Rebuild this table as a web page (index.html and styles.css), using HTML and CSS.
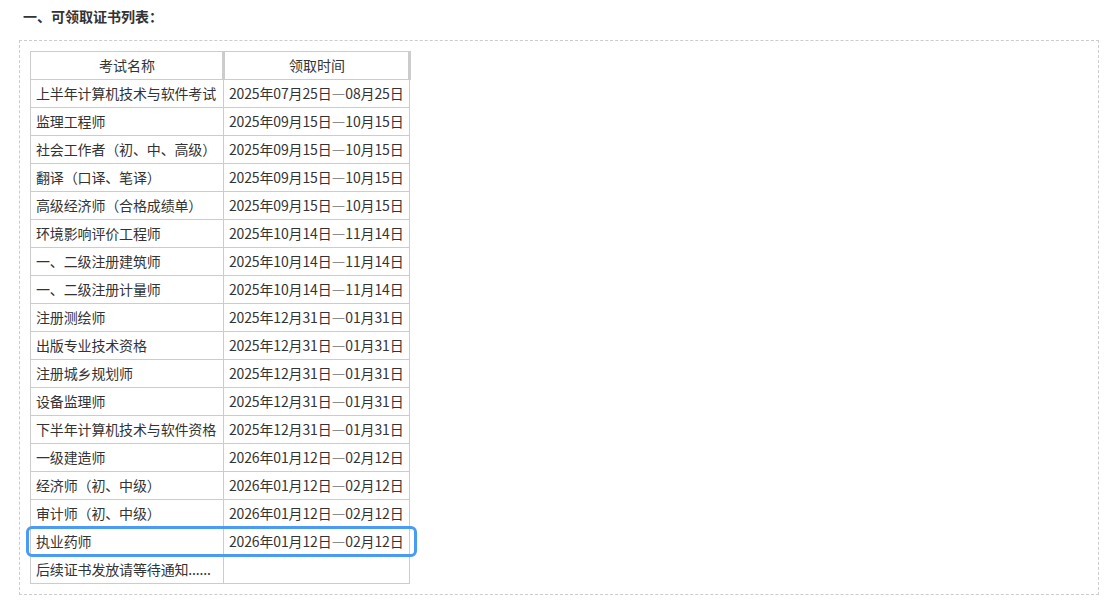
FILE: index.html
```html
<!DOCTYPE html>
<html lang="zh-CN">
<head>
  <meta charset="UTF-8">
  <title>可领取证书列表</title>
  <link rel="stylesheet" href="styles.css">
</head>
<body>
  <h3 class="titulo">一、可领取证书列表：</h3>
  <div class="caja">
    <div class="tabla-wrap">
      <table class="tabla-cert">
        <colgroup>
          <col class="col-nombre">
          <col class="col-fecha">
        </colgroup>
        <thead>
          <tr>
            <th>考试名称</th>
            <th>领取时间</th>
          </tr>
        </thead>
        <tbody>
          <tr><td>上半年计算机技术与软件考试</td><td>2025年07月25日—08月25日</td></tr>
          <tr><td>监理工程师</td><td>2025年09月15日—10月15日</td></tr>
          <tr><td>社会工作者（初、中、高级）</td><td>2025年09月15日—10月15日</td></tr>
          <tr><td>翻译（口译、笔译）</td><td>2025年09月15日—10月15日</td></tr>
          <tr><td>高级经济师（合格成绩单）</td><td>2025年09月15日—10月15日</td></tr>
          <tr><td>环境影响评价工程师</td><td>2025年10月14日—11月14日</td></tr>
          <tr><td>一、二级注册建筑师</td><td>2025年10月14日—11月14日</td></tr>
          <tr><td>一、二级注册计量师</td><td>2025年10月14日—11月14日</td></tr>
          <tr><td>注册测绘师</td><td>2025年12月31日—01月31日</td></tr>
          <tr><td>出版专业技术资格</td><td>2025年12月31日—01月31日</td></tr>
          <tr><td>注册城乡规划师</td><td>2025年12月31日—01月31日</td></tr>
          <tr><td>设备监理师</td><td>2025年12月31日—01月31日</td></tr>
          <tr><td>下半年计算机技术与软件资格</td><td>2025年12月31日—01月31日</td></tr>
          <tr><td>一级建造师</td><td>2026年01月12日—02月12日</td></tr>
          <tr><td>经济师（初、中级）</td><td>2026年01月12日—02月12日</td></tr>
          <tr><td>审计师（初、中级）</td><td>2026年01月12日—02月12日</td></tr>
          <tr><td>执业药师</td><td>2026年01月12日—02月12日</td></tr>
          <tr><td>后续证书发放请等待通知......</td><td></td></tr>
        </tbody>
      </table>
      <div class="marca"></div>
    </div>
  </div>
</body>
</html>
```

FILE: styles.css
```css
body { margin: 0; font-family: "Microsoft YaHei", "Noto Sans CJK SC", "Noto Sans", sans-serif; color: #333; background: #fff; }
.titulo { margin: 0; padding: 6px 0 0 23px; font-size: 14px; font-weight: bold; line-height: 20px; color: #333; }
.caja { margin: 14px 0 0 19px; width: 1058px; height: 533px; padding: 10px; border: 1px dashed #ccc; }
.tabla-wrap { position: relative; width: 379px; }
.tabla-cert { width: 379px; border-collapse: collapse; table-layout: fixed; font-size: 14px; }
.col-nombre { width: 193px; }
.col-fecha { width: 186px; }
.tabla-cert th, .tabla-cert td { height: 27px; padding: 0 4px 0 5px; border: 1px solid #ccc; white-space: nowrap; overflow: hidden; line-height: 27px; }
.tabla-cert th { font-weight: normal; text-align: center; border-right: 3px solid #ccc; }
.tabla-cert td { text-align: left; letter-spacing: -0.15px; }
.marca { position: absolute; left: -4px; top: 475px; width: 385px; height: 25px; border: 3px solid #4a9bf3; border-radius: 6px; }
```
